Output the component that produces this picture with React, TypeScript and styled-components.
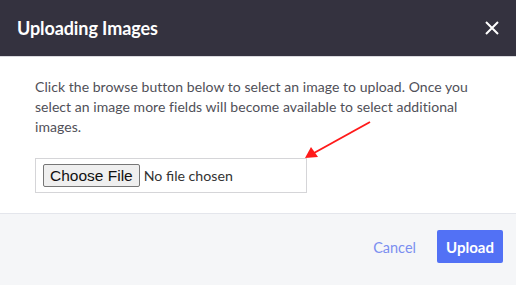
import * as React from 'react';
import styled, { createGlobalStyle } from 'styled-components';

const GlobalStyle = createGlobalStyle`
    html, body {
        margin: 0;
        padding: 0;
        background: #ffffff;
    }
    body {
        font-family: Lato, "Open Sans", sans-serif;
    }
`;

const ModalHtml = styled.div`
    position: relative;
    width: 516px;
    height: 285px;
    display: flex;
    flex-direction: column;
    background: white;
    overflow: hidden;
`;

const HeaderHtml = styled.div`
    height: 56px;
    display: flex;
    flex-direction: row;
    justify-content: space-between;
    align-items: center;
    padding: 0 12px 0 17px;
    background: #34323f;
    border-bottom: 1px solid #d9d9de;
`;

const TitleHtml = styled.div`
    color: white;
    font-weight: bold;
    font-size: 18px;
    letter-spacing: -0.1px;
`;

const CloseButton = styled.button`
    width: 24px;
    height: 24px;
    padding: 0;
    border: none;
    background: transparent;
    display: flex;
    align-items: center;
    justify-content: center;
    cursor: pointer;
`;

const BodyHtml = styled.div`
    padding: 20px 35px 20px 35px;
    height: 157px;
    box-sizing: border-box;
    border-bottom: 1px solid #e4e6ec;
`;

const HelpText = styled.p`
    margin: 0;
    color: #505058;
    font-size: 14px;
    letter-spacing: 0.05px;
    line-height: 20px;
`;

const FileBox = styled.div`
    margin-top: 21px;
    width: 272px;
    height: 35px;
    box-sizing: border-box;
    border: 1px solid #d5d5d8;
    display: flex;
    align-items: center;
    padding-left: 7px;
`;

const FileInput = styled.input`
    font-family: Lato, sans-serif;
    font-size: 14.2px;
    color: #333;
    &::file-selector-button {
        font-family: "Liberation Sans", Arial, sans-serif;
        font-size: 15.5px;
        color: #111;
        background: #efefef;
        border: 1px solid #767676;
        border-radius: 2px;
        padding: 1px 6px;
        height: 23px;
        margin-right: 4px;
    }
`;

const FooterHtml = styled.div`
    flex: 1;
    background: #f5f6f8;
    display: flex;
    flex-direction: row;
    justify-content: flex-end;
    align-items: flex-start;
    gap: 21px;
    padding: 16px 13px 0 0;
`;

const LinkButton = styled.button`
    border: none;
    background: transparent;
    color: #7b8ef0;
    font-family: Lato, sans-serif;
    font-size: 14.5px;
    height: 34px;
    padding: 0;
`;

const PrimaryButton = styled.button`
    border: none;
    border-radius: 2px;
    background: #5271f5;
    color: white;
    font-family: Lato, sans-serif;
    font-weight: bold;
    font-size: 15px;
    width: 66px;
    height: 33px;
    padding: 0;
`;

const ArrowSvg = styled.svg`
    position: absolute;
    left: 0;
    top: 0;
    pointer-events: none;
`;

export default function App()
{
    return (
        <>
            <GlobalStyle />
            <ModalHtml>
                <HeaderHtml>
                    <TitleHtml>Uploading Images</TitleHtml>
                    <CloseButton aria-label="Close">
                        <svg width="14" height="14" viewBox="0 0 14 14">
                            <path d="M1 1 L13 13 M13 1 L1 13" stroke="white" strokeWidth="2" />
                        </svg>
                    </CloseButton>
                </HeaderHtml>
                <BodyHtml>
                    <HelpText>
                        Click the browse button below to select an image to upload. Once you
                        select an image more fields will become available to select additional
                        images.
                    </HelpText>
                    <FileBox>
                        <FileInput type="file" />
                    </FileBox>
                </BodyHtml>
                <FooterHtml>
                    <LinkButton>Cancel</LinkButton>
                    <PrimaryButton>Upload</PrimaryButton>
                </FooterHtml>
                <ArrowSvg width="516" height="285">
                    <line x1="370" y1="122" x2="314" y2="153" stroke="#ff1a1a" strokeWidth="2" />
                    <polygon points="305,158 311,147 318,157" fill="#ff1a1a" />
                </ArrowSvg>
            </ModalHtml>
        </>
    );
}
